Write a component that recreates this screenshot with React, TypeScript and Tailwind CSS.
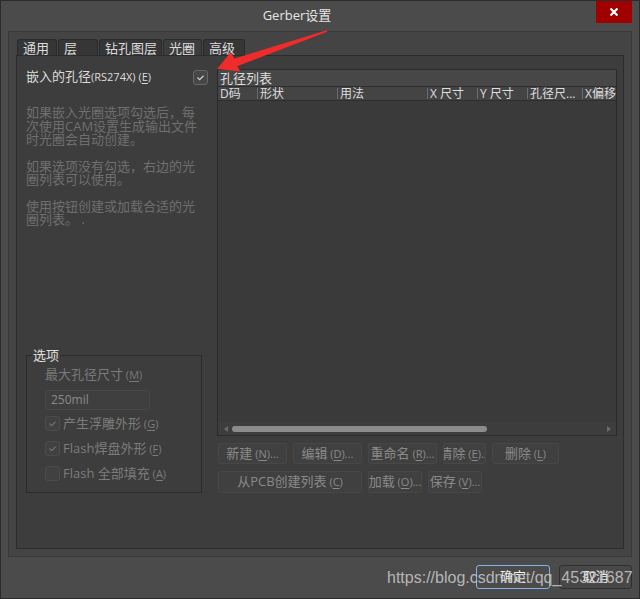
import React from 'react';

const Check = ({ color }: { color: string }) => (
  <svg viewBox="0 0 15 15" className="h-[13px] w-[13px]" fill="none" stroke={color} strokeWidth="1.3">
    <path d="M4 7.5l2.5 2.5 4.5-4.5" />
  </svg>
);

// Small "(X)" mnemonic with the letter underlined
const Key = ({ k, tail = '' }: { k: string; tail?: string }) => (
  <span className="text-[11px]">
    {' ('}
    <span className="underline underline-offset-2">{k}</span>
    {')'}
    {tail}
  </span>
);

const Btn = ({ w, label, k, tail = '...' }: { w: string; label: string; k: string; tail?: string }) => (
  <div
    className={`${w} flex items-center justify-center overflow-hidden whitespace-nowrap rounded-[2px] border border-[#474747] bg-[#404040] text-[#8a8a8a]`}
  >
    <span className="shrink-0">
      {label}
      <Key k={k} tail={tail} />
    </span>
  </div>
);

const OptRow = ({ checked, label, k }: { checked: boolean; label: string; k: string }) => (
  <div className="flex h-[15px] items-center gap-[3px]">
    <div className="flex h-[15px] w-[15px] items-center justify-center rounded-[3px] border border-[#4c4c4c] bg-[#414141]">
      {checked && <Check color="#707070" />}
    </div>
    <span className="leading-[15px] text-[#7c7c7c]">
      {label}
      <Key k={k} />
    </span>
  </div>
);

const tabs = [
  { label: '通用', w: 'w-[40px]' },
  { label: '层', w: 'w-[40px]' },
  { label: '钻孔图层', w: 'w-[63px]' },
  { label: '光圈', w: 'w-[39px]', active: true },
  { label: '高级', w: 'w-[42px]' },
];

const columns = [
  { label: 'D码', w: 'w-[39px]', first: true },
  { label: '形状', w: 'w-[80px]' },
  { label: '用法', w: 'w-[90px]' },
  { label: 'X 尺寸', w: 'w-[50px]' },
  { label: 'Y 尺寸', w: 'w-[50px]' },
  { label: '孔径尺...', w: 'w-[55px]' },
  { label: 'X偏移', w: 'flex-1' },
];

export default function App() {
  return (
    <div className="relative flex h-[599px] w-[640px] flex-col overflow-hidden border border-[#2b2b2b] bg-[#4b4b4b] font-['Open_Sans','Noto_Sans_CJK_SC',sans-serif] text-[13px] text-[#dcdcdc]">
      {/* Title bar */}
      <div className="relative flex h-[30px] shrink-0 items-center justify-center pr-[46px]">
        <span className="text-[#e6e6e6]">Gerber设置</span>
        <div className="absolute right-[7px] top-0 flex h-[22px] w-[36px] items-center justify-center bg-[#a00000]">
          <svg viewBox="0 0 8 8" className="h-[8px] w-[8px]" stroke="#ffffff" strokeWidth="2.2">
            <path d="M0.5 0.5l7 7M7.5 0.5l-7 7" />
          </svg>
        </div>
      </div>

      {/* Outer panel */}
      <div className="mx-[7px] flex h-[526px] flex-col border border-[#393939] bg-[#444444] px-[7px] pb-[7px] pt-[7px]">
        {/* Tabs */}
        <div className="flex h-[16px] shrink-0 items-end gap-[1px] pl-[1px]">
          {tabs.map((t) => (
            <div
              key={t.label}
              className={`${t.w} flex h-[16px] items-center rounded-t-[3px] border border-b-0 pl-[5px] leading-[16px] ${
                t.active ? 'border-[#2c2c2c] bg-[#3d3d3d]' : 'border-[#2a2a2a] bg-[#363636]'
              }`}
            >
              {t.label}
            </div>
          ))}
        </div>

        {/* Tab content */}
        <div className="flex flex-1 border border-[#2c2c2c] bg-[#3d3d3d]">
          {/* Left column */}
          <div className="flex w-[200px] shrink-0 flex-col pl-[9px] pt-[13px]">
            <div className="flex h-[16px] items-center justify-between pr-[9px]">
              <span>
                嵌入的孔径<span className="text-[11px]">(RS274X)</span>
                <Key k="E" />
              </span>
              <div className="flex h-[15px] w-[15px] items-center justify-center rounded-[3px] border border-[#666666] bg-[#474747]">
                <Check color="#cfcfcf" />
              </div>
            </div>

            <div className="mt-[21px] leading-[13.5px] text-[#6f6f6f]">
              <p>
                如果嵌入光圈选项勾选后，每
                <br />
                次使用CAM设置生成输出文件
                <br />
                时光圈会自动创建。
              </p>
              <p className="mt-[13px]">
                如果选项没有勾选，右边的光
                <br />
                圈列表可以使用。
              </p>
              <p className="mt-[13px]">
                使用按钮创建或加载合适的光
                <br />
                圈列表。 .
              </p>
            </div>

            {/* Options group */}
            <div className="relative mt-[128px] h-[138px] w-[176px] border border-[#2a2a2a] pl-[18px] pt-[10px]">
              <span className="absolute -top-[9px] left-[5px] bg-[#3d3d3d] px-[1px] leading-[16px] text-[#e0e0e0]">
                选项
              </span>
              <div className="leading-[16px] text-[#7a7a7a]">
                最大孔径尺寸
                <Key k="M" />
              </div>
              <div className="mt-[7px] flex h-[20px] w-[105px] items-center rounded-[3px] border border-[#474747] bg-[#3f3f3f] pl-[5px] text-[12px] text-[#8a8a8a]">
                250mil
              </div>
              <div className="mt-[6px] flex flex-col gap-[10px]">
                <OptRow checked label="产生浮雕外形" k="G" />
                <OptRow checked label="Flash焊盘外形" k="F" />
                <OptRow checked={false} label="Flash 全部填充" k="A" />
              </div>
            </div>
          </div>

          {/* Right column */}
          <div className="flex flex-1 flex-col pr-[7px] pt-[13px]">
            <div className="flex h-[367px] flex-col border border-[#2a2a2a] bg-[#3a3a3a]">
              <div className="flex h-[17px] items-center border-b border-[#2e2e2e] bg-[#474747] pl-[2px] leading-[16px] text-[#dedede]">
                孔径列表
              </div>
              <div className="flex h-[14px] items-center overflow-hidden border-b border-[#2e2e2e] bg-[#444444] text-[12px] leading-[13px] text-[#dedede]">
                {columns.map((c) => (
                  <div key={c.label} className={`${c.w} flex h-[13px] items-center overflow-hidden whitespace-nowrap`}>
                    {!c.first && <span className="mr-[2px] h-[11px] w-px shrink-0 bg-[#6c6c6c]" />}
                    <span className={c.first ? 'pl-[2px]' : ''}>{c.label}</span>
                  </div>
                ))}
              </div>
              <div className="flex-1" />
              {/* Horizontal scrollbar */}
              <div className="flex h-[13px] items-center bg-[#3d3d3d] pl-[6px] pr-[5px]">
                <span className="h-0 w-0 border-y-[3.5px] border-r-[4px] border-y-transparent border-r-[#6a6a6a]" />
                <div className="ml-[4px] h-[6px] w-[255px] rounded-full bg-[#8c8c8c]" />
                <div className="flex-1" />
                <span className="h-0 w-0 border-y-[3.5px] border-l-[4px] border-y-transparent border-l-[#6a6a6a]" />
              </div>
            </div>

            <div className="mt-[7px] flex h-[21px] gap-[6px] pl-[1px]">
              <Btn w="w-[69px]" label="新建" k="N" />
              <Btn w="w-[69px]" label="编辑" k="D" />
              <Btn w="w-[69px]" label="重命名" k="R" />
              <Btn w="w-[43px]" label="清除" k="E" tail="..." />
              <Btn w="w-[67px]" label="删除" k="L" tail="" />
            </div>
            <div className="mt-[7px] flex h-[22px] gap-[6px] pl-[1px]">
              <Btn w="w-[144px]" label="从PCB创建列表" k="C" tail="" />
              <Btn w="w-[54px]" label="加载" k="O" />
              <Btn w="w-[54px]" label="保存" k="V" />
            </div>
          </div>
        </div>
      </div>

      {/* Dialog buttons */}
      <div className="flex justify-end gap-[9px] pr-[7px] pt-[8px]">
        <div className="flex h-[24px] w-[74px] items-center justify-center rounded-[3px] border border-[#80b4e6] bg-[#4b4b4b] text-[#f0f0f0]">
          确定
        </div>
        <div className="flex h-[24px] w-[73px] items-center justify-center rounded-[3px] border border-[#2f2f2f] bg-[#484848] text-[#f0f0f0]">
          取消
        </div>
      </div>

      {/* Watermark */}
      <span className="pointer-events-none absolute left-[386px] top-[569px] whitespace-nowrap font-['Liberation_Sans',sans-serif] text-[16px] leading-[16px] text-[#c4c4c4]/90">
        https://blog.csdn.net/qq_45321687
      </span>

      {/* Red annotation arrow */}
      <svg
        viewBox="215 28 115 46"
        className="pointer-events-none absolute left-[214px] top-[27px] h-[46px] w-[115px]"
      >
        <polygon
          points="217,69 231,52 234.2,58.6 326.7,30.3 327.3,31.7 237.2,66.2 240.5,71.5"
          fill="#f02b2b"
        />
      </svg>
    </div>
  );
}
